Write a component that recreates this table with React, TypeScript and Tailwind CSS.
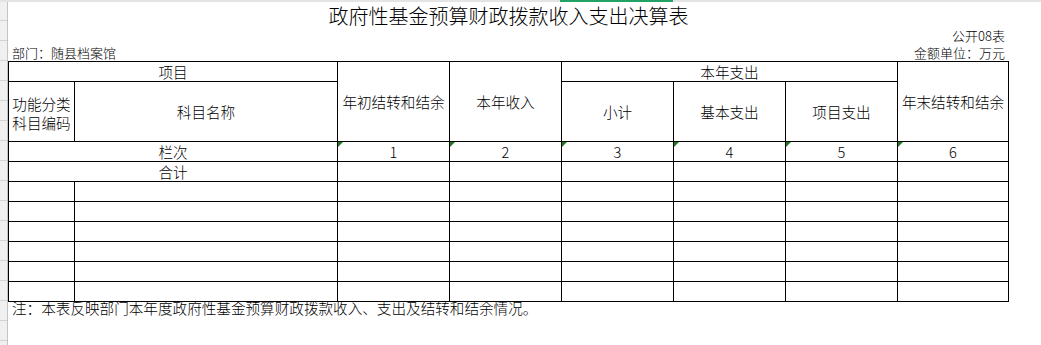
import React from "react";

const CJK = { fontFamily: '"Noto Sans CJK SC", sans-serif' };

function Tri() {
  return (
    <svg className="absolute left-0 top-0" width="5" height="5" viewBox="0 0 5 5">
      <polygon points="0,0 5,0 0,5" fill="#1e7b1e" />
    </svg>
  );
}

const cell = "border-r border-b border-black flex items-center justify-center text-center relative";

export default function App() {
  const dataRows = Array.from({ length: 6 });
  const stripRows = Array.from({ length: 18 });
  return (
    <div className="w-[1041px] h-[345px] bg-white overflow-hidden flex flex-col text-black font-light" style={CJK}>
      <div className="h-[2px] flex shrink-0 bg-[#e4e4e4]">
        <div className="w-[560px]" />
        <div className="w-[113px] bg-[#21a366]" />
      </div>
      <div className="flex flex-1">
        <div className="w-[8px] shrink-0 bg-[#f0f0f0] border-r border-[#c4c4c4] flex flex-col">
          <div className="h-[19px] shrink-0 border-b border-[#d4d4d4]" />
          {stripRows.map((_, i) => (
            <div key={i} className="h-[20px] shrink-0 border-b border-[#d4d4d4]" />
          ))}
        </div>
        <div className="w-[1001px] flex flex-col">
          <div className="h-[25px] flex items-center justify-center text-[20px] leading-none pt-[3px]">
            政府性基金预算财政拨款收入支出决算表
          </div>
          <div className="h-[16px] flex items-center justify-end pr-[4px] text-[13px] leading-none">
            公开08表
          </div>
          <div className="h-[18px] flex items-center justify-between pl-[4px] pr-[4px] text-[13px] leading-none">
            <span>部门：随县档案馆</span>
            <span>金额单位：万元</span>
          </div>
          <div className="border-t border-l border-black text-[14.6px] leading-[17px] w-[1001px]">
            <div className="grid grid-cols-[66px_263px_112px_112px_112px_112px_112px_111px] grid-rows-[20px_60px_20px_20px_20px_20px_20px_20px_20px_20px]">
              <div className={`${cell} col-span-2`}>项目</div>
              <div className={`${cell} col-start-3 row-span-2 row-start-1`}>年初结转和结余</div>
              <div className={`${cell} col-start-4 row-span-2 row-start-1`}>本年收入</div>
              <div className={`${cell} col-start-5 col-span-3 row-start-1`}>本年支出</div>
              <div className={`${cell} col-start-8 row-span-2 row-start-1`}>年末结转和结余</div>
              <div className={`${cell} col-start-1 row-start-2 pt-[2px] flex-col leading-[19px]`}>
                <span>功能分类</span>
                <span>科目编码</span>
              </div>
              <div className={`${cell} col-start-2 row-start-2`}>科目名称</div>
              <div className={`${cell} col-start-5 row-start-2`}>小计</div>
              <div className={`${cell} col-start-6 row-start-2`}>基本支出</div>
              <div className={`${cell} col-start-7 row-start-2`}>项目支出</div>

              <div className={`${cell} col-span-2`}>栏次</div>
              {[1, 2, 3, 4, 5, 6].map((n) => (
                <div key={n} className={cell}>
                  <Tri />
                  {n}
                </div>
              ))}

              <div className={`${cell} col-span-2`}>合计</div>
              {[1, 2, 3, 4, 5, 6].map((n) => (
                <div key={n} className={cell} />
              ))}

              {dataRows.map((_, r) =>
                Array.from({ length: 8 }).map((__, c) => <div key={`${r}-${c}`} className={cell} />)
              )}
            </div>
          </div>
          <div className="h-[20px] pl-[4px] text-[14.6px] leading-[12px]">
            注：本表反映部门本年度政府性基金预算财政拨款收入、支出及结转和结余情况。
          </div>
        </div>
      </div>
    </div>
  );
}
